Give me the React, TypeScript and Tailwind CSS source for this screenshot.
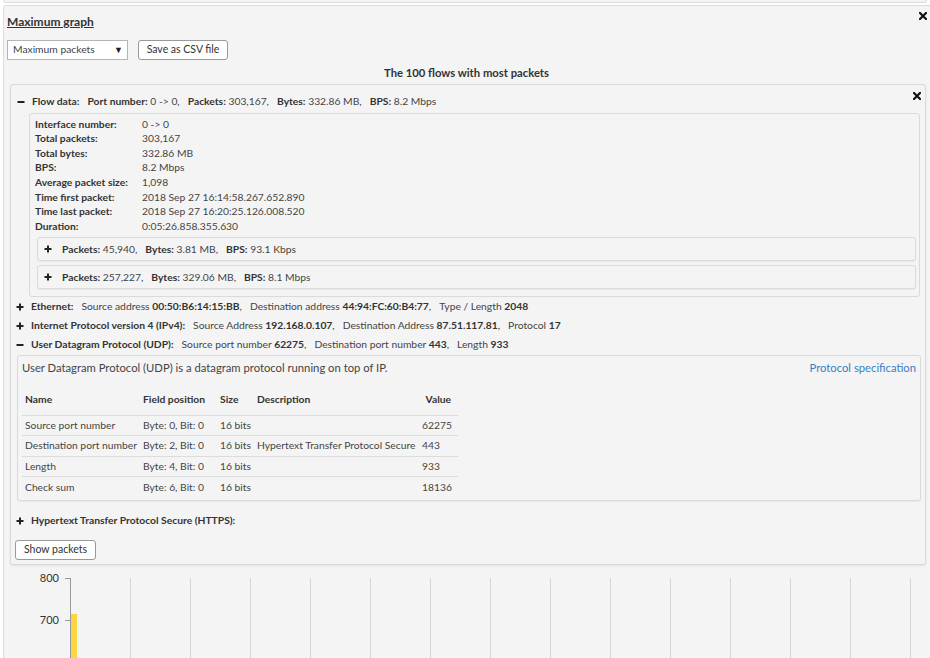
import React from 'react';

const font = { fontFamily: 'Lato, "Open Sans", "Liberation Sans", sans-serif' };

function CloseIcon() {
  return (
    <svg width="8" height="8" viewBox="0 0 8 8" className="block">
      <path d="M1 1 L7 7 M7 1 L1 7" stroke="#111" strokeWidth="2.2" strokeLinecap="square" />
    </svg>
  );
}

function Toggle({ open }: { open: boolean }) {
  return (
    <svg width="8" height="8" viewBox="0 0 8 8" className="block shrink-0">
      <rect x="0.5" y="3" width="7" height="2" fill="#222" />
      {!open && <rect x="3" y="0.5" width="2" height="7" fill="#222" />}
    </svg>
  );
}

const details: [string, string][] = [
  ['Interface number:', '0 -> 0'],
  ['Total packets:', '303,167'],
  ['Total bytes:', '332.86 MB'],
  ['BPS:', '8.2 Mbps'],
  ['Average packet size:', '1,098'],
  ['Time first packet:', '2018 Sep 27 16:14:58.267.652.890'],
  ['Time last packet:', '2018 Sep 27 16:20:25.126.008.520'],
  ['Duration:', '0:05:26.858.355.630'],
];

const fields = [
  { name: 'Source port number', pos: 'Byte: 0, Bit: 0', size: '16 bits', desc: '', value: '62275' },
  { name: 'Destination port number', pos: 'Byte: 2, Bit: 0', size: '16 bits', desc: 'Hypertext Transfer Protocol Secure', value: '443' },
  { name: 'Length', pos: 'Byte: 4, Bit: 0', size: '16 bits', desc: '', value: '933' },
  { name: 'Check sum', pos: 'Byte: 6, Bit: 0', size: '16 bits', desc: '', value: '18136' },
];

function SubFlow({ packets, bytes, bps }: { packets: string; bytes: string; bps: string }) {
  return (
    <div className="flex h-[24px] items-center rounded-[3px] border border-[#dadada] bg-[#f4f4f4] pl-[6px] shadow-[0_1px_1px_rgba(0,0,0,0.05)]">
      <Toggle open={false} />
      <div className="ml-[10px] flex gap-[8px]">
        <span><b className="text-[#333]">Packets:</b> {packets},</span>
        <span><b className="text-[#333]">Bytes:</b> {bytes},</span>
        <span><b className="text-[#333]">BPS:</b> {bps}</span>
      </div>
    </div>
  );
}

function ProtoRow({ open, title, parts }: { open: boolean; title: string; parts: [string, string][] }) {
  return (
    <div className="flex h-[19px] items-center pl-[1px]">
      <Toggle open={open} />
      <b className="ml-[7px] text-[#333]">{title}</b>
      <div className="ml-[8px] flex gap-[8px]">
        {parts.map(([k, v], i) => (
          <span key={k}>
            {k} <b className="text-[#333]">{v}</b>
            {i < parts.length - 1 ? ',' : ''}
          </span>
        ))}
      </div>
    </div>
  );
}

function Chart() {
  const grid = Array.from({ length: 14 }, (_, i) => 123 + i * 60);
  return (
    <svg width="924" height="110" className="block">
      <text x="52" y="17" textAnchor="end" fontSize="11" fill="#333" fontFamily="Lato, sans-serif">800</text>
      <text x="52" y="59" textAnchor="end" fontSize="11" fill="#333" fontFamily="Lato, sans-serif">700</text>
      <line x1="58" y1="13.5" x2="63" y2="13.5" stroke="#999" />
      <line x1="58" y1="55.5" x2="63" y2="55.5" stroke="#999" />
      <line x1="63.5" y1="13" x2="63.5" y2="110" stroke="#999" />
      {grid.map((x) => (
        <line key={x} x1={x + 0.5} y1="13" x2={x + 0.5} y2="110" stroke="#d6d6d6" />
      ))}
      <rect x="64" y="49" width="6" height="61" fill="#fbd63f" />
    </svg>
  );
}

export default function App() {
  return (
    <div className="h-[658px] w-[930px] overflow-hidden bg-white text-[10.3px] text-[#444]" style={font}>
      <div className="mx-[3px] h-[3px] rounded-b border-x border-b border-[#dcdcdc] bg-[#f4f4f4]" />
      <div className="ml-[3px] mt-[2px] w-[940px] rounded-[3px] border border-[#dcdcdc] bg-[#f4f4f4] pl-[3px] pt-[9px]">
        <div className="flex h-[14px] w-[920px] items-start justify-between leading-[14px]">
          <span className="text-[12px] font-bold text-[#333] underline">Maximum graph</span>
          <span className="-mt-[3px]"><CloseIcon /></span>
        </div>

        <div className="mt-[11px] flex items-center">
          <div className="flex h-[20px] w-[121px] items-center justify-between border border-[#b5b5b5] bg-white pl-[5px] pr-[4px] text-[#444]">
            <span>Maximum packets</span>
            <span className="text-[9px] text-[#222]">▼</span>
          </div>
          <button className="ml-[10px] h-[20px] w-[90px] rounded-[3px] border border-[#999] bg-white text-[10.5px] text-[#333]">
            Save as CSV file
          </button>
        </div>

        <div className="mt-[6px] h-[14px] w-[919px] text-center text-[11.25px] font-bold leading-[14px] text-[#333]">
          The 100 flows with most packets
        </div>

        <div className="ml-[3px] mt-[4px] w-[916px] rounded-[3px] border border-[#dadada] bg-[#f4f4f4] pb-[4px] pl-[4px] pr-[4px] pt-[9px] shadow-[0_1px_2px_rgba(0,0,0,0.08)]">
          <div className="flex h-[16px] items-center justify-between pl-[2px]">
            <div className="flex items-center">
              <Toggle open />
              <b className="ml-[7px] text-[#333]">Flow data:</b>
              <div className="ml-[8px] flex gap-[8px]">
                <span><b className="text-[#333]">Port number:</b> 0 -&gt; 0,</span>
                <span><b className="text-[#333]">Packets:</b> 303,167,</span>
                <span><b className="text-[#333]">Bytes:</b> 332.86 MB,</span>
                <span><b className="text-[#333]">BPS:</b> 8.2 Mbps</span>
              </div>
            </div>
            <span className="-mt-[13px] mr-0"><CloseIcon /></span>
          </div>

          <div className="ml-[14px] mr-[1px] mt-[3px] rounded-[3px] border border-[#dadada] bg-[#f4f4f4] pb-[7px] pl-[5px] pr-[3px] pt-[3px]">
            {details.map(([k, v]) => (
              <div key={k} className="flex h-[14.6px] items-center">
                <b className="w-[107px] text-[#333]">{k}</b>
                <span>{v}</span>
              </div>
            ))}
            <div className="mt-[3.5px] flex flex-col gap-[4px] pl-[2px]">
              <SubFlow packets="45,940" bytes="3.81 MB" bps="93.1 Kbps" />
              <SubFlow packets="257,227" bytes="329.06 MB" bps="8.1 Mbps" />
            </div>
          </div>

          <ProtoRow
            open={false}
            title="Ethernet:"
            parts={[
              ['Source address', '00:50:B6:14:15:BB'],
              ['Destination address', '44:94:FC:60:B4:77'],
              ['Type / Length', '2048'],
            ]}
          />
          <ProtoRow
            open={false}
            title="Internet Protocol version 4 (IPv4):"
            parts={[
              ['Source Address', '192.168.0.107'],
              ['Destination Address', '87.51.117.81'],
              ['Protocol', '17'],
            ]}
          />
          <ProtoRow
            open
            title="User Datagram Protocol (UDP):"
            parts={[
              ['Source port number', '62275'],
              ['Destination port number', '443'],
              ['Length', '933'],
            ]}
          />

          <div className="ml-[2px] mt-[1px] rounded-[3px] border border-[#dadada] bg-[#f4f4f4] pb-[3px] pl-[4px] pr-[4px] pt-[5px] shadow-[0_1px_1px_rgba(0,0,0,0.05)]">
            <div className="flex h-[14px] items-center justify-between text-[11.25px]">
              <span>User Datagram Protocol (UDP) is a datagram protocol running on top of IP.</span>
              <span className="text-[#3b7dc4]">Protocol specification</span>
            </div>
            <table className="mt-[13px] w-[436px] table-fixed border-collapse text-left">
              <thead>
                <tr className="h-[27px] border-b border-[#dcdcdc] text-[#333]">
                  <th className="w-[118px] pb-[3px] pl-[3px] font-bold">Name</th>
                  <th className="w-[77px] pb-[3px] pl-[3px] font-bold">Field position</th>
                  <th className="w-[37px] pb-[3px] pl-[3px] font-bold">Size</th>
                  <th className="w-[165px] pb-[3px] pl-[3px] font-bold">Description</th>
                  <th className="w-[39px] pb-[3px] pr-[7px] text-right font-bold">Value</th>
                </tr>
              </thead>
              <tbody>
                {fields.map((f, i) => (
                  <tr key={f.name} className={`h-[20.5px] ${i < fields.length - 1 ? 'border-b border-[#dcdcdc]' : ''}`}>
                    <td className="whitespace-nowrap pl-[3px]">{f.name}</td>
                    <td className="whitespace-nowrap pl-[3px]">{f.pos}</td>
                    <td className="whitespace-nowrap pl-[3px]">{f.size}</td>
                    <td className="whitespace-nowrap pl-[3px]">{f.desc}</td>
                    <td className="pl-[3px]">{f.value}</td>
                  </tr>
                ))}
              </tbody>
            </table>
          </div>

          <div className="mt-[10px] flex h-[19px] items-center pl-[1px]">
            <Toggle open={false} />
            <b className="ml-[7px] text-[#333]">Hypertext Transfer Protocol Secure (HTTPS):</b>
          </div>

          <button className="mt-[10px] h-[20px] w-[81px] rounded-[3px] border border-[#999] bg-white text-[10.5px] text-[#333]">
            Show packets
          </button>
        </div>

        <Chart />
      </div>
    </div>
  );
}
